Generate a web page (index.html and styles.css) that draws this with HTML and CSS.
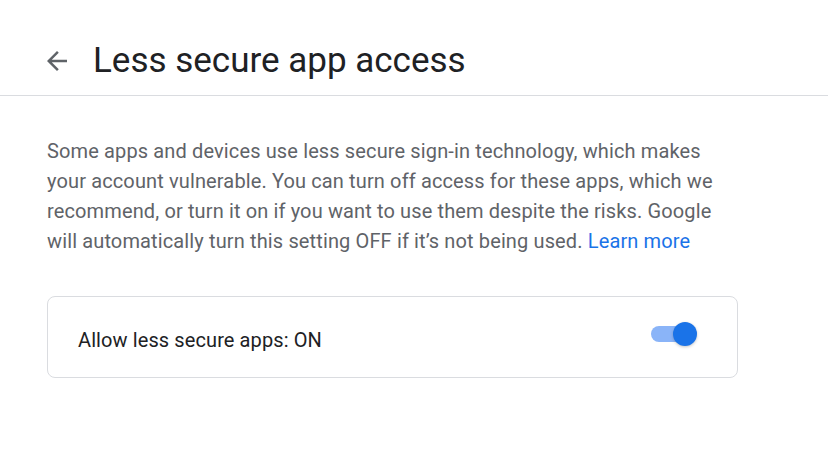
FILE: index.html
```html
<!DOCTYPE html>
<html>
<head>
<meta charset="utf-8">
<link rel="stylesheet" href="styles.css">
</head>
<body>
<header class="topbar">
  <button class="back" aria-label="Back">
    <svg width="30" height="30" viewBox="0 0 24 24"><path fill="#5f6368" d="M20 11H7.83l5.59-5.59L12 4l-8 8 8 8 1.41-1.41L7.83 13H20v-2z"/></svg>
  </button>
  <h1 class="title">Less secure app access</h1>
</header>
<main class="content">
  <p class="desc">Some apps and devices use less secure sign-in technology, which makes your account vulnerable. You can turn off access for these apps, which we recommend, or turn it on if you want to use them despite the risks. Google will automatically turn this setting OFF if it’s not being used. <a class="link" href="#">Learn more</a></p>
  <div class="card">
    <span class="label">Allow less secure apps: ON</span>
    <span class="switch"><span class="track"></span><span class="thumb"></span></span>
  </div>
</main>
</body>
</html>
```
FILE: styles.css
```css
html, body { margin: 0; padding: 0; background: #fff; }
body { font-family: Roboto, "Noto Sans", Arial, sans-serif; color: #202124; }
.topbar {
  height: 69px;
  padding-top: 26px;
  border-bottom: 1px solid #dadce0;
  display: flex;
  align-items: center;
  padding-left: 42px;
  box-sizing: content-box;
}
.back {
  border: 0; background: none; padding: 0; margin: 0;
  width: 30px; height: 30px; display: flex; align-items: center; justify-content: center;
  margin-top: 1px;
}
.title {
  margin: 0 0 0 21px;
  font-weight: 400;
  font-size: 35px;
  color: #202124;
  letter-spacing: 0;
}
.content { padding: 40px 0 0 47px; }
.desc {
  margin: 0;
  width: 691px;
  font-size: 20px;
  letter-spacing: 0.13px;
  line-height: 30px;
  color: #5f6368;
}
.link { color: #1a73e8; text-decoration: none; }
.card {
  margin-top: 40px;
  width: 691px;
  height: 82px;
  box-sizing: border-box;
  border: 1px solid #dadce0;
  border-radius: 8px;
  display: flex;
  align-items: center;
  justify-content: space-between;
  padding: 0 40px 0 30px;
}
.label { font-size: 20px; letter-spacing: 0.1px; color: #202124; padding-top: 5px; }
.switch { position: relative; width: 46px; height: 24px; display: block; margin-top: -6px; }
.track {
  position: absolute; left: 0; top: 4px;
  width: 38px; height: 16px; border-radius: 8px;
  background: #8ab4f8;
}
.thumb {
  position: absolute; right: 0; top: 0;
  width: 24px; height: 24px; border-radius: 50%;
  background: #1a73e8;
  box-shadow: 0 1px 3px rgba(60,64,67,.3);
}
```
